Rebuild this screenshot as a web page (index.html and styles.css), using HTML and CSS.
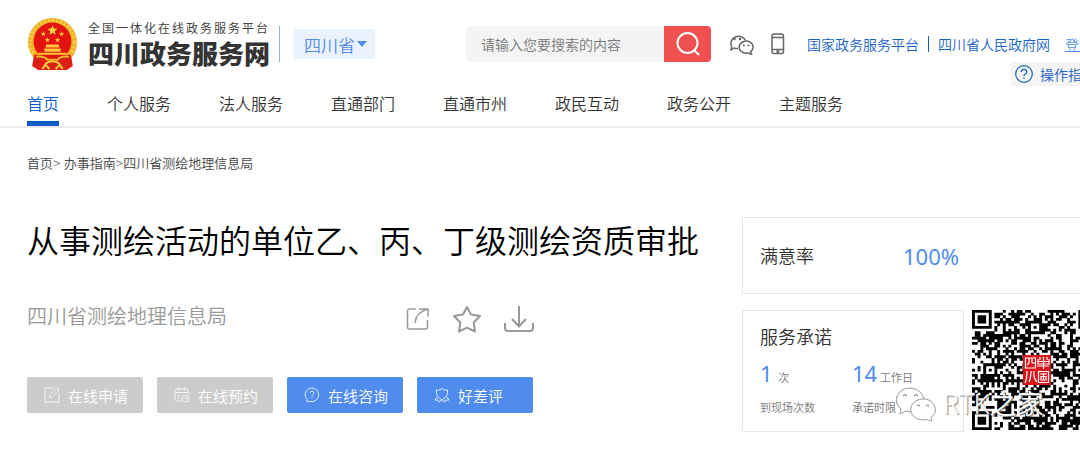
FILE: index.html
```
<!DOCTYPE html>
<html lang="zh-CN">
<head>
    <meta charset="UTF-8">
    <meta name="viewport" content="width=device-width, initial-scale=1.0">
    <title>四川政务服务网</title>
    <link rel="stylesheet" href="styles.css">
</head>
<body>
    <header class="header">
        <div class="topbar">
            <a class="logo" href="#">
                <svg class="emblem" viewBox="0 0 50 52" aria-hidden="true">
                    <circle cx="25" cy="24" r="24" fill="#eeb021"/>
                    <circle cx="25" cy="24" r="21.5" fill="none" stroke="#f7d050" stroke-width="3" stroke-dasharray="2 2"/>
                    <path d="M7 36 L43 36 L45 47 L39 51 L11 51 L5 47 Z" fill="#dc1f14"/>
                    <circle cx="25" cy="23" r="18.500" fill="#e3130f"/>
                    <path d="M25 7l1.400 3.400 3.600.2-2.800 2.300.9 3.600-3.100-2-3.100 2 .9-3.600L20 10.600l3.600-.2z" fill="#fbd43c"/>
                    <g fill="#fbc83c">
                        <path id="star" d="M16 13l.7 1.700 1.800.1-1.400 1.200.5 1.800-1.600-1-1.600 1 .5-1.800-1.400-1.200 1.800-.1z"/>
                        <use href="#star" x="18"/>
                        <use href="#star" x="4" y="6"/>
                        <use href="#star" x="14" y="6"/>
                        <path d="M19 26h12l1 3H18zM17 30h16v3H17zM11 34h28v2H11z"/>
                    </g>
                    <path d="M9 38q8-1 11 3h10q3-4 11-3" fill="none" stroke="#f3b52b" stroke-width="2"/>
                    <path d="M18 45q7-5 14 0M15 50l3-4 4 4M28 50l4-4 3 4" fill="none" stroke="#f8cd3e" stroke-width="2"/>
                </svg>
                <span class="logo-text">
                    <span class="logo-sub">全国一体化在线政务服务平台</span>
                    <span class="logo-name">四川政务服务网</span>
                </span>
            </a>
            <button class="province" type="button">四川省<span class="caret"></span></button>
            <form class="search">
                <input class="search-input" type="text" placeholder="请输入您要搜索的内容" aria-label="搜索">
                <button class="search-button" type="button" aria-label="搜索">
                    <svg width="24" height="24" viewBox="0 0 24 24" fill="none" stroke="#fff" stroke-width="2"><circle cx="11.500" cy="11" r="10"/><path d="M18 18l5 5"/></svg>
                </button>
            </form>
            <a class="top-icon" href="#" aria-label="微信">
                <svg width="26" height="22" viewBox="0 0 26 22" fill="none" stroke="#666" stroke-width="1.500">
                    <path d="M10 15.500q-2 .4-4-.5L3 17l.6-3.500A7.500 7 0 1 1 17.500 7.500"/>
                    <path d="M22.500 18.800A7 6 0 1 0 19.500 20l4 1.200z"/>
                    <g fill="#666" stroke="none"><circle cx="6.500" cy="6" r="1.200"/><circle cx="12" cy="6" r="1.200"/><circle cx="15.800" cy="12.500" r="1"/><circle cx="20.500" cy="12.500" r="1"/></g>
                </svg>
            </a>
            <a class="top-icon" href="#" aria-label="手机">
                <svg width="14" height="22" viewBox="0 0 14 22" fill="none" stroke="#666" stroke-width="1.500"><rect x="1" y="1" width="11.500" height="19.500" rx="2"/><path d="M1 4.500h12M1 16.500h12"/><circle cx="6.800" cy="18.500" r=".8"/></svg>
            </a>
            <nav class="links">
                <a href="#">国家政务服务平台</a>
                <span class="bar"></span>
                <a href="#">四川省人民政府网</a>
                <a class="login" href="#">登录</a>
            </nav>
        </div>
        <a class="guide" href="#">
            <svg width="18" height="18" viewBox="0 0 18 18" fill="none" stroke="#1763c5" stroke-width="1.200"><circle cx="9" cy="9" r="8.300"/><path d="M6.300 7q0-2.700 2.700-2.700T11.700 7q0 1.200-1.500 2T9 11.200M9 12.500v1.500"/></svg>
            操作指南
        </a>
        <nav class="menu">
            <a class="active" href="#">首页</a>
            <a href="#">个人服务</a>
            <a href="#">法人服务</a>
            <a href="#">直通部门</a>
            <a href="#">直通市州</a>
            <a href="#">政民互动</a>
            <a href="#">政务公开</a>
            <a href="#">主题服务</a>
        </nav>
    </header>

    <nav class="crumbs"><a href="#">首页</a>&gt; <a href="#">办事指南</a>&gt;<a href="#">四川省测绘地理信息局</a></nav>

    <main class="content">
        <section class="item">
            <h1 class="title">从事测绘活动的单位乙、丙、丁级测绘资质审批</h1>
            <div class="dept-row">
                <span class="dept">四川省测绘地理信息局</span>
                <div class="tools">
                    <button type="button" aria-label="分享">
                        <svg width="24" height="24" viewBox="0 0 24 24" fill="none" stroke="#999" stroke-width="1.500"><path d="M10 2H3.500Q1.500 2 1.500 4v16q0 2 2 2h16q2 0 2-2v-7M13 2h9v7.500M22 2Q10 5 9 16"/></svg>
                    </button>
                    <button type="button" aria-label="收藏">
                        <svg width="30" height="28" viewBox="0 0 30 28" fill="none" stroke="#999" stroke-width="2" stroke-linejoin="round"><path d="M15 2l4 7.500 9 1.500-6.300 6.500L23 26.500l-8-3.800-8 3.800 1.300-9L2 11l9-1.500z"/></svg>
                    </button>
                    <button type="button" aria-label="下载">
                        <svg width="30" height="28" viewBox="0 0 30 28" fill="none" stroke="#999" stroke-width="2"><path d="M15 1v20M8 14l7 7.500 7-7.500M1 18v5q0 3 3 3h22q3 0 3-3v-5"/></svg>
                    </button>
                </div>
            </div>
            <div class="actions">
                <button class="action" type="button" disabled>
                    <svg width="16" height="16" viewBox="0 0 16 16"><path d="M10.500 1H1v14h14V6M5 11l.6-3L13 1l2 2-7.200 7.300z"/></svg>
                    在线申请
                </button>
                <button class="action" type="button" disabled>
                    <svg width="16" height="16" viewBox="0 0 16 16"><path d="M7 14H3q-2 0-2-2V4q0-2 2-2h9q2 0 2 2v3M1 5.500h13M4.500 0v3.500M10.500 0v3.500M3.500 8.500H6M3.500 11H6"/><circle cx="11.500" cy="11.500" r="3.500"/><path d="M11.500 9.500v2h2"/></svg>
                    在线预约
                </button>
                <button class="action primary" type="button">
                    <svg width="16" height="16" viewBox="0 0 16 16"><path d="M3 14.500V12.500A6.800 6.800 0 1 1 8 14.600zM6 6q0-2 2-2t2 2q0 1-1 1.500T8 9M8 10.200v1.400"/></svg>
                    在线咨询
                </button>
                <button class="action primary" type="button">
                    <svg width="16" height="16" viewBox="0 0 16 16"><path d="M8 1.500l2 1.500h3.500v3.500Q13.500 10 8 13 2.500 10 2.500 6.500V3H6zM3 10l-2 3h3l1 2 3-2 3 2 1-2h3l-2-3"/></svg>
                    好差评
                </button>
            </div>
        </section>

        <aside class="side">
            <div class="card rate">
                <span class="card-title">满意率</span>
                <span class="number">100%</span>
            </div>
            <div class="side-row">
                <div class="card promise">
                    <h2 class="card-title">服务承诺</h2>
                    <div class="stats">
                        <div class="stat"><div><span class="number">1</span>&nbsp; 次</div><div>到现场次数</div></div>
                        <div class="stat"><div><span class="number">14</span> 工作日</div><div>承诺时限</div></div>
                    </div>
                </div>
                <div class="qr">
                    <svg id="qr" class="qr-code" viewBox="0 0 45 45" preserveAspectRatio="none" role="img" aria-label="二维码"></svg>
                    <svg class="seal" viewBox="0 0 28 30" fill="none" stroke="#fff" stroke-width="1.200" aria-hidden="true">
                        <rect width="28" height="30" fill="#d9131a" stroke="none"/>
                        <path d="M2.500 3h10v10h-10zM6 3v5l-2 2M9 3v5h3M15 4v5h11V4M15 6.500h11M20.500 2v12M17 2v3M24 2v3M14 11h12M4 16q0 8-2 12M8 16q0 7-2 11M11 16q-1 7 3 11M15.500 16.500h10v11h-10zM17 19h7M18 21.500h5v3.500h-5zM20.500 18v7"/>
                    </svg>
                </div>
            </div>
            <div class="watermark">
                <svg width="42" height="34" viewBox="0 0 42 34" fill="#fff" stroke="#999" stroke-width="1" aria-hidden="true">
                    <path d="M15 1a14 12 0 0 0-9 21l-1 5 6-3q3 1 7 .5A15 12 0 0 0 15 1z"/>
                    <path d="M28 12a12.500 10.500 0 1 0 4 20.500l5 2-1-4A12 10.500 0 0 0 28 12z"/>
                    <path d="M8 9q2-3 4 0M19 9q2-3 4 0M22 19q1.500-2 3 0M31 19q1.500-2 3 0" fill="none" stroke="#666"/>
                </svg>
                <span>RTK之家</span>
            </div>
        </aside>
    </main>

    <script src="qr.js"></script>
</body>
</html>
```
FILE: styles.css
```
* {
    box-sizing: border-box;
}

body {
    margin: 0;
    background: #fff;
    color: #333;
    font-family: "Noto Sans", "Noto Sans CJK SC", sans-serif;
    font-weight: 350;
    font-size: 14px;
    overflow-x: hidden;
}

a {
    color: inherit;
    text-decoration: none;
}

button {
    font: inherit;
    border: none;
    padding: 0;
    cursor: pointer;
}

svg {
    display: block;
    flex-shrink: 0;
}

.header {
    position: relative;
    border-bottom: 2px solid #ebebeb;
}

.topbar {
    display: flex;
    align-items: center;
    height: 88px;
    padding-left: 27px;
    white-space: nowrap;
    overflow: hidden;
}

.topbar > * {
    flex-shrink: 0;
}

.logo {
    display: flex;
    align-items: center;
    gap: 10px;
    padding-right: 12px;
    background: linear-gradient(#8db4ee, #8db4ee) right center / 1px 36px no-repeat;
}

.emblem {
    width: 51px;
    height: 53px;
}

.logo-text {
    display: flex;
    flex-direction: column;
    width: 180px;
}

.logo-sub {
    font-size: 12px;
    font-weight: 400;
    line-height: 20px;
    letter-spacing: 2px;
    color: #444;
}

.logo-name {
    font-size: 26px;
    font-weight: 900;
    line-height: 30px;
    color: #333;
}

.province {
    display: flex;
    align-items: center;
    gap: 2px;
    height: 30px;
    margin-left: 13px;
    padding: 0 8px 0 11px;
    background: #ebf2fd;
    color: #4f8cee;
    font-size: 17px;
}

.caret {
    border: 5px solid transparent;
    border-top: 6px solid #4f8cee;
    border-bottom: none;
}

.search {
    display: flex;
    width: 245px;
    height: 36px;
    margin-left: 91px;
}

.search-input {
    flex: 1;
    min-width: 0;
    border: none;
    border-radius: 4px 0 0 4px;
    padding: 0 15px;
    background: #f4f4f4;
    font: inherit;
}

.search-input::placeholder {
    color: #777;
}

.search-button {
    display: flex;
    align-items: center;
    justify-content: center;
    width: 47px;
    border-radius: 0 4px 4px 0;
    background: #f05050;
}

.top-icon {
    margin-left: 17px;
}

.links {
    display: flex;
    align-items: center;
    gap: 9px;
    margin-left: 22px;
    color: #1763c5;
}

.bar {
    width: 1px;
    height: 16px;
    background: #1763c5;
}

.login {
    margin-left: 6px;
    color: #4f8cee;
    text-decoration: underline;
}

/* sits over the right edge of the header */
.guide {
    position: absolute;
    top: 62px;
    right: 0;
    display: flex;
    align-items: center;
    gap: 7px;
    width: 69px;
    height: 24px;
    padding-left: 4px;
    background: #f4f4f4;
    color: #1763c5;
    white-space: nowrap;
    overflow: hidden;
}

.menu {
    display: flex;
    gap: 48px;
    padding-left: 27px;
    font-size: 16px;
    line-height: 32px;
}

.menu a {
    height: 38px;
    border-bottom: 5px solid transparent;
}

.menu .active {
    color: #0a5dc7;
    border-color: #0a5dc7;
}

.crumbs {
    padding: 25px 27px 0;
    font-size: 13px;
    line-height: 20px;
    color: #444;
}

.content {
    display: flex;
    justify-content: space-between;
    padding-left: 27px;
}

.item {
    padding-top: 43px;
}

.title {
    margin: 0;
    font-size: 32px;
    font-weight: 350;
    line-height: 50px;
    color: #000;
    white-space: nowrap;
}

.dept-row {
    display: flex;
    align-items: center;
    margin-top: 33px;
    height: 36px;
}

.dept {
    width: 379px;
    font-size: 20px;
    line-height: 30px;
    color: #999;
}

.tools {
    display: flex;
    align-items: center;
    gap: 22px;
    padding-top: 4px;
}

.tools button {
    background: none;
}

.actions {
    display: flex;
    gap: 14px;
    margin-top: 42px;
}

.action {
    display: flex;
    align-items: center;
    gap: 8px;
    width: 116px;
    height: 36px;
    padding-left: 17px;
    border-radius: 2px;
    background: #ccc;
    color: #fff;
    font-size: 15px;
    white-space: nowrap;
}

.action.primary {
    background: #4f8cee;
}

.action svg {
    fill: none;
    stroke: #fff;
    opacity: 0.8;
}

.side {
    position: relative;
    width: 338px;
    padding-top: 44px;
}

.card {
    border: 1px solid #e6e6e6;
    padding-left: 17px;
}

.card-title {
    margin: 0;
    font-size: 18px;
    font-weight: 350;
    line-height: 26px;
}

.number {
    font-size: 22px;
    font-weight: 400;
    line-height: 26px;
    color: #4f8cee;
}

.rate {
    display: flex;
    align-items: center;
    gap: 89px;
    height: 77px;
    border-right: none;
}

.side-row {
    display: flex;
    gap: 8px;
    margin-top: 16px;
}

.promise {
    flex-shrink: 0;
    width: 222px;
    height: 122px;
    padding-top: 13px;
}

.stats {
    display: flex;
    margin-top: 10px;
    font-size: 11px;
    color: #777;
}

.stat {
    width: 92px;
    white-space: nowrap;
}

.stat div {
    line-height: 30px;
}

.qr {
    position: relative;
    flex-shrink: 0;
}

.qr-code {
    width: 126px;
    height: 120px;
}

.seal {
    position: absolute;
    top: 45px;
    left: 51px;
    width: 28px;
    height: 30px;
}

.watermark {
    position: absolute;
    top: 214px;
    left: 153px;
    display: flex;
    align-items: center;
    gap: 6px;
    font-size: 27px;
    line-height: 34px;
    color: #fff;
    text-shadow: 1px 1px 1px #777;
    white-space: nowrap;
}
```
FILE: qr.js
```
var qr = document.getElementById("qr");
var size = 45;
var seed = 20;
var path = "";

function random() {
    seed = (seed * 16807) % 2147483647;
    return seed / 2147483647;
}

// centre x, centre y, radius of the finder and alignment marks
var marks = [
    [3, 3, 3],
    [size - 4, 3, 3],
    [3, size - 4, 3],
    [22, 6, 2],
    [6, 22, 2],
    [38, 22, 2],
    [22, 38, 2],
    [38, 38, 2]
];

function markAt(x, y) {
    for (var i = 0; i < marks.length; i++) {
        var r = marks[i][2];
        var ring = Math.max(Math.abs(x - marks[i][0]), Math.abs(y - marks[i][1]));
        if (r === 3 && ring <= 4) {
            return ring === 3 || ring < 2;
        }
        if (r === 2 && ring <= 2) {
            return ring !== 1;
        }
    }
    return null;
}

for (var y = 0; y < size; y++) {
    for (var x = 0; x < size; x++) {
        var noise = random() < 0.53;
        var mark = markAt(x, y);
        if (mark === null ? noise : mark) {
            path += "M" + x + " " + y + "h1.05v1.05h-1.05z";
        }
    }
}

qr.innerHTML = '<path d="' + path + '"/>';
```
